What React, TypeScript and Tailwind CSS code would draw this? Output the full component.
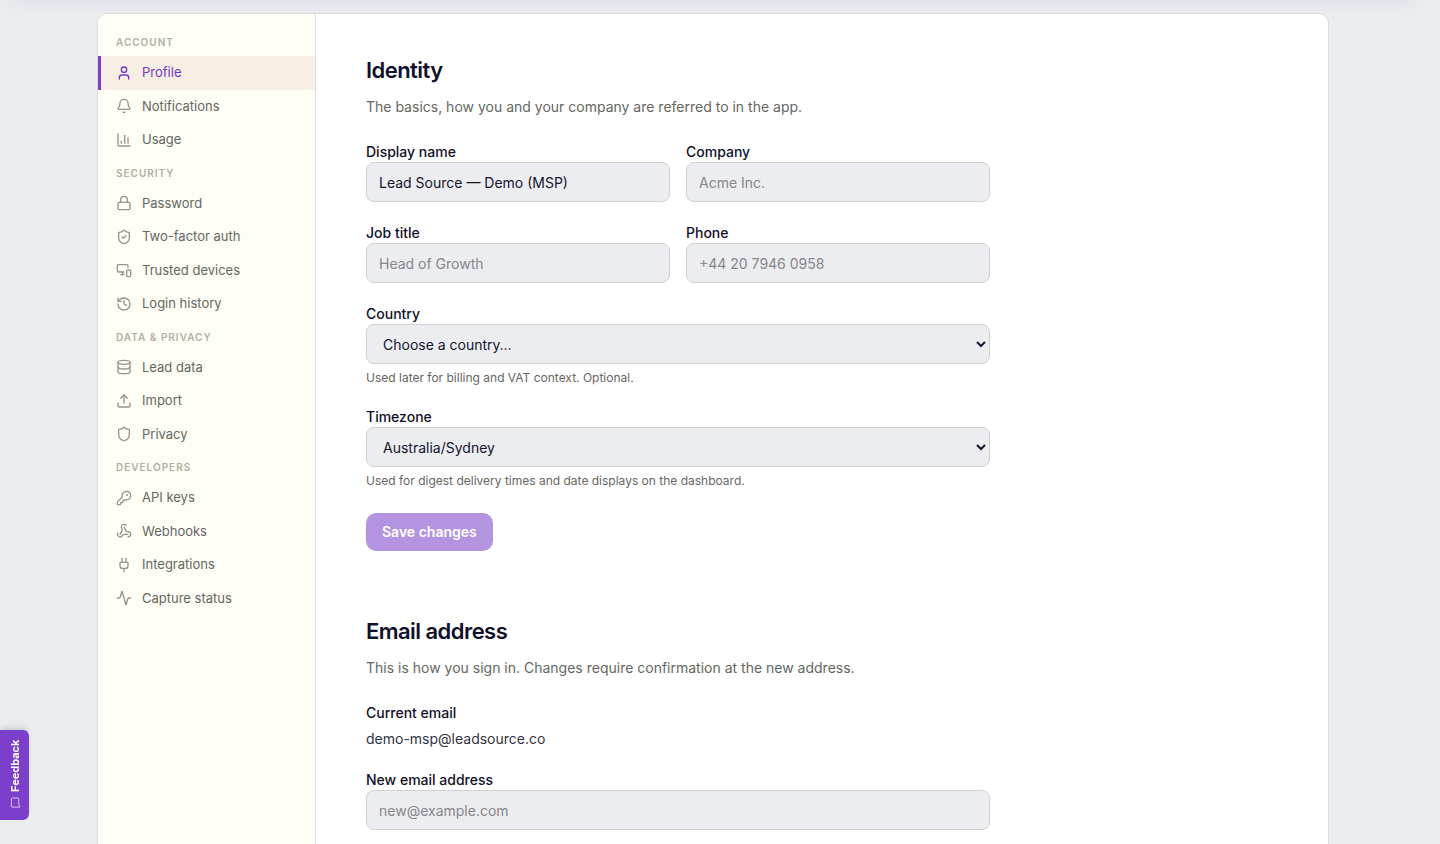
import React from "react";
import {
  Activity,
  Bell,
  ChartColumn,
  Database,
  History,
  KeyRound,
  Lock,
  MessageSquare,
  MonitorSmartphone,
  Plug,
  Shield,
  ShieldCheck,
  Upload,
  User,
  Webhook,
  type LucideIcon,
} from "lucide-react";

type NavItem = { label: string; icon: LucideIcon; active?: boolean };
type NavGroup = { title: string; items: NavItem[] };

const groups: NavGroup[] = [
  {
    title: "Account",
    items: [
      { label: "Profile", icon: User, active: true },
      { label: "Notifications", icon: Bell },
      { label: "Usage", icon: ChartColumn },
    ],
  },
  {
    title: "Security",
    items: [
      { label: "Password", icon: Lock },
      { label: "Two-factor auth", icon: ShieldCheck },
      { label: "Trusted devices", icon: MonitorSmartphone },
      { label: "Login history", icon: History },
    ],
  },
  {
    title: "Data & privacy",
    items: [
      { label: "Lead data", icon: Database },
      { label: "Import", icon: Upload },
      { label: "Privacy", icon: Shield },
    ],
  },
  {
    title: "Developers",
    items: [
      { label: "API keys", icon: KeyRound },
      { label: "Webhooks", icon: Webhook },
      { label: "Integrations", icon: Plug },
      { label: "Capture status", icon: Activity },
    ],
  },
];

const control =
  "block h-10 w-full rounded-lg border border-[#d0d0cf] bg-[#ecedf1] px-3 text-sm text-[#14142b] placeholder:text-[#85868c]";

function Field({
  id,
  label,
  hint,
  children,
}: {
  id: string;
  label: string;
  hint?: string;
  children: React.ReactNode;
}) {
  return (
    <div>
      <label htmlFor={id} className="block text-sm/[21px] font-medium">
        {label}
      </label>
      {children}
      {hint && <p className="mt-[5px] text-xs/[17px] text-[#66665f]">{hint}</p>}
    </div>
  );
}

function Section({ title, intro, children }: { title: string; intro: string; children: React.ReactNode }) {
  return (
    <section>
      <h2 className="text-[22px]/[33px] font-semibold tracking-tight">{title}</h2>
      <p className="mt-[9px] mb-6 text-sm/[21px] text-[#66665f]">{intro}</p>
      {children}
    </section>
  );
}

function Sidebar() {
  return (
    <nav aria-label="Settings" className="w-[218px] shrink-0 border-r border-[#dcdce2] bg-[#fefef6] pt-3">
      {groups.map((group) => (
        <div key={group.title}>
          <h3 className="px-[18px] pt-[9px] pb-1.5 text-[10px] leading-normal font-semibold tracking-widest text-[#b3aea3] uppercase">
            {group.title}
          </h3>
          <ul>
            {group.items.map(({ label, icon: Icon, active }) => (
              <li key={label}>
                <a
                  href="#"
                  aria-current={active ? "page" : undefined}
                  className={
                    active
                      ? "flex items-center gap-2.5 border-l-3 border-[#7c3fcb] bg-[#f6eee3] py-[7px] pr-4 pl-[15px] text-[13px] leading-normal text-[#7238bd]"
                      : "flex items-center gap-2.5 border-l-3 border-transparent py-[7px] pr-4 pl-[15px] text-[13px] leading-normal text-[#66665f]"
                  }
                >
                  <Icon
                    className={active ? "size-4 shrink-0" : "size-4 shrink-0 text-[#94948c]"}
                    strokeWidth={2}
                  />
                  {label}
                </a>
              </li>
            ))}
          </ul>
        </div>
      ))}
    </nav>
  );
}

export default function App() {
  return (
    <div className="flow-root min-h-screen overflow-x-clip bg-[#ecedf1] pr-3.5 font-['Inter',sans-serif] text-[#10102a]">
      <div className="-mt-10 mb-[13px] h-10 shadow-[0_8px_28px_-8px_rgba(20,20,60,0.07)]" />
      <div className="mx-auto max-w-[1280px] px-6">
        <div className="flex min-h-[calc(100vh-13px)] overflow-hidden rounded-t-[10px] border border-b-0 border-[#dcdce2] bg-white">
          <Sidebar />
          <main className="min-w-0 flex-1 px-[50px] pt-10 pb-3.5">
            <div className="flex max-w-[624px] flex-col gap-16">
              <Section title="Identity" intro="The basics, how you and your company are referred to in the app.">
                <form className="flex flex-col gap-5" onSubmit={(e) => e.preventDefault()}>
                  <div className="grid grid-cols-2 gap-x-4 gap-y-5">
                    <Field id="display-name" label="Display name">
                      <input id="display-name" className={control} defaultValue="Lead Source — Demo (MSP)" />
                    </Field>
                    <Field id="company" label="Company">
                      <input id="company" className={control} placeholder="Acme Inc." />
                    </Field>
                    <Field id="job-title" label="Job title">
                      <input id="job-title" className={control} placeholder="Head of Growth" />
                    </Field>
                    <Field id="phone" label="Phone">
                      <input id="phone" type="tel" className={control} placeholder="+44 20 7946 0958" />
                    </Field>
                  </div>
                  <Field id="country" label="Country" hint="Used later for billing and VAT context. Optional.">
                    <select id="country" className={control}>
                      <option>Choose a country…</option>
                    </select>
                  </Field>
                  <Field
                    id="timezone"
                    label="Timezone"
                    hint="Used for digest delivery times and date displays on the dashboard."
                  >
                    <select id="timezone" className={control}>
                      <option>Australia/Sydney</option>
                    </select>
                  </Field>
                  <button
                    type="submit"
                    disabled
                    className="mt-1 h-[38px] self-start rounded-[10px] bg-[#b494e1] px-4 text-sm font-semibold text-white"
                  >
                    Save changes
                  </button>
                </form>
              </Section>
              <Section
                title="Email address"
                intro="This is how you sign in. Changes require confirmation at the new address."
              >
                <div className="flex flex-col gap-5">
                  <dl className="flex flex-col gap-[5px] text-sm/[21px]">
                    <dt className="font-medium">Current email</dt>
                    <dd className="text-[#33333f]">demo-msp@leadsource.co</dd>
                  </dl>
                  <Field id="new-email" label="New email address">
                    <input id="new-email" type="email" className={control} placeholder="new@example.com" />
                  </Field>
                </div>
              </Section>
            </div>
          </main>
        </div>
      </div>
      <button
        type="button"
        className="fixed bottom-6 left-0 flex h-[90px] w-[29px] rotate-180 items-center gap-[5px] rounded-l-md bg-[#7c3fcb] pt-3 pr-2 pb-2 pl-1.5 text-[11px]/[13px] font-bold text-white shadow-md [writing-mode:vertical-rl]"
      >
        <MessageSquare className="size-[11px] shrink-0 rotate-90 text-[#e0cff5]" strokeWidth={2} />
        Feedback
      </button>
    </div>
  );
}
